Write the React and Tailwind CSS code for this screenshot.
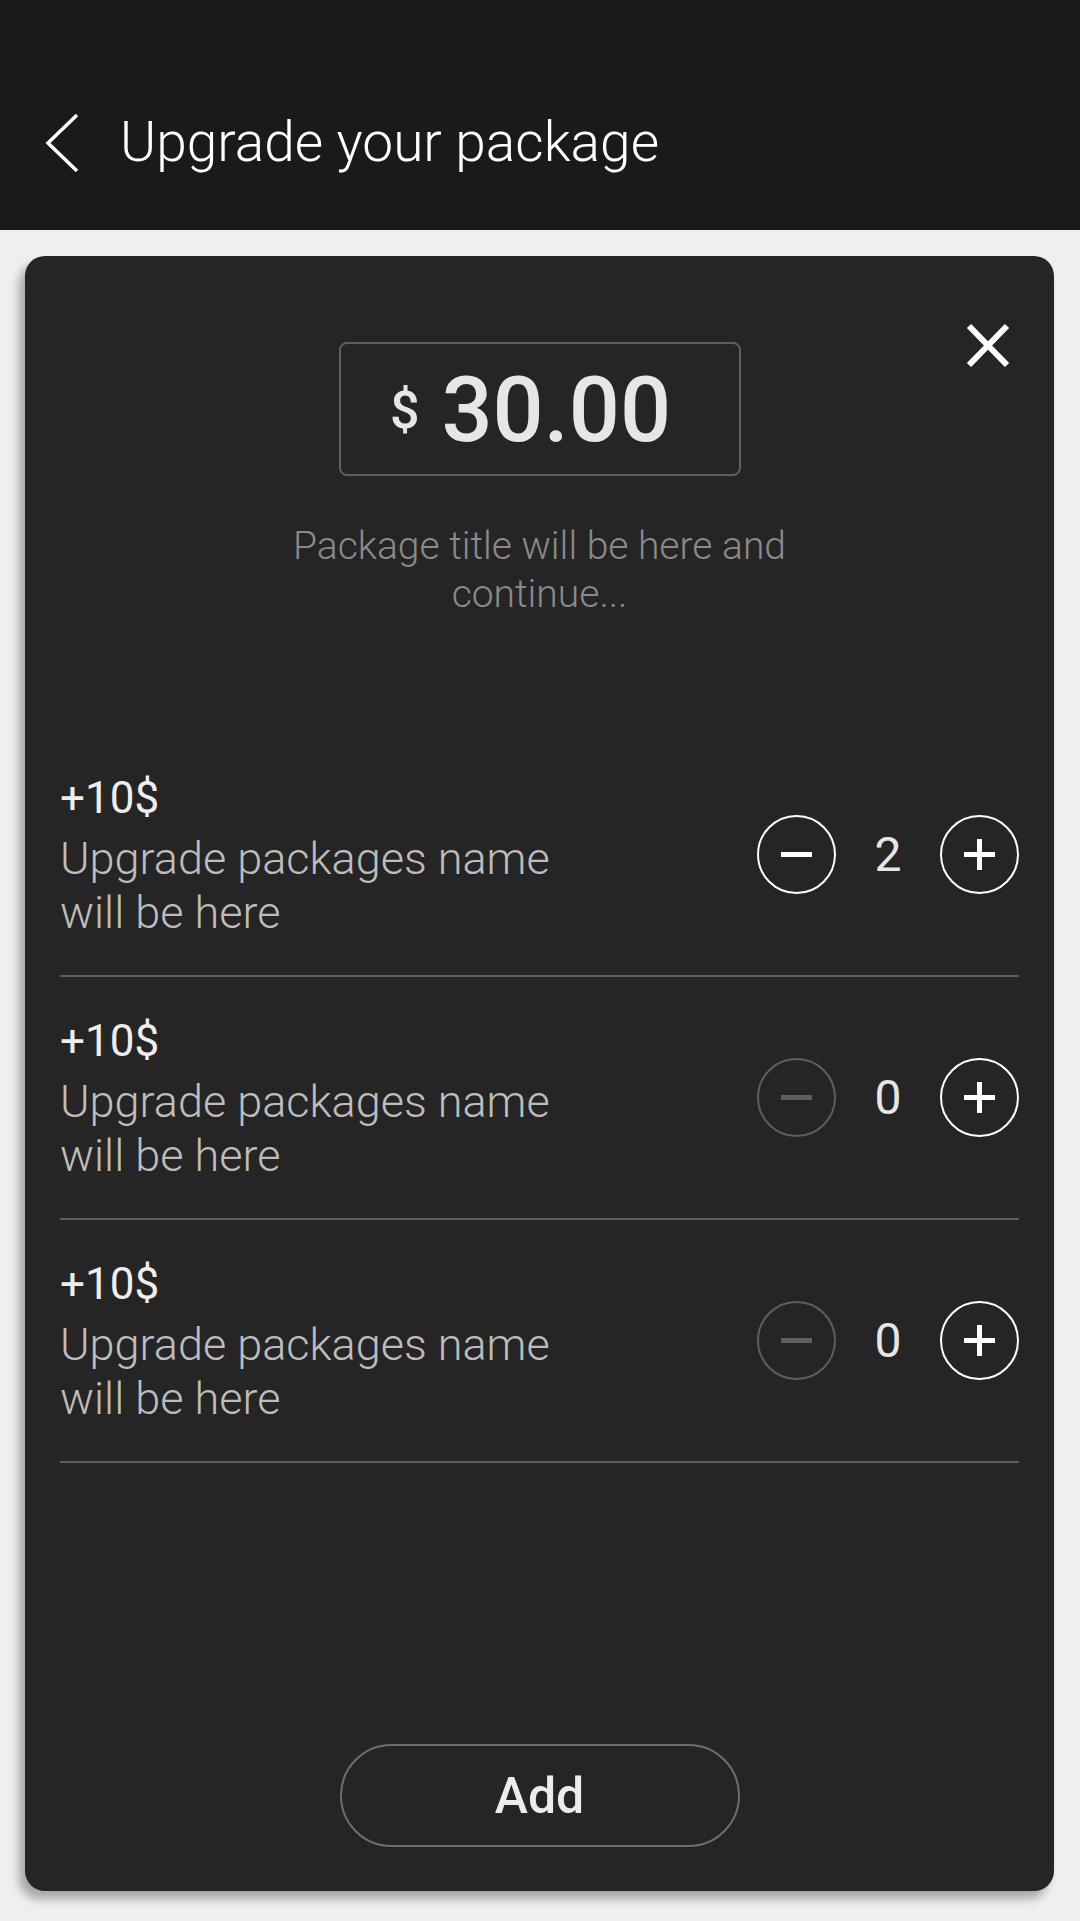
import React from "react";

const upgrades = [
  { price: "+10$", name: "Upgrade packages name will be here", qty: 2 },
  { price: "+10$", name: "Upgrade packages name will be here", qty: 0 },
  { price: "+10$", name: "Upgrade packages name will be here", qty: 0 },
];

const MinusIcon = ({ active }) => (
  <span
    className={`block w-[31px] h-[5px] ${active ? "bg-white" : "bg-[#5e5e5e]"}`}
  />
);

const Stepper = ({ qty }) => {
  const active = qty > 0;
  return (
    <div className="flex items-center">
      <button
        className={`w-[79px] h-[79px] rounded-full border-2 flex items-center justify-center ${
          active ? "border-white" : "border-[#5e5e5e]"
        }`}>
        <MinusIcon active={active} />
      </button>
      <span className="w-[104px] text-center text-[48px] leading-none text-[#e6e6e6]">
        {qty}
      </span>
      <button className="w-[79px] h-[79px] rounded-full border-2 border-white flex items-center justify-center">
        <svg width="31" height="31" viewBox="0 0 31 31">
          <rect x="13" y="0" width="5" height="31" fill="#fff" />
          <rect x="0" y="13" width="31" height="5" fill="#fff" />
        </svg>
      </button>
    </div>
  );
};

const App = () => {
  return (
    <div
      className="min-h-[1921px] bg-[#efefef]"
      style={{ fontFamily: "Roboto, 'Liberation Sans', sans-serif" }}>
      {/* Header */}
      <header className="h-[230px] bg-[#1a1a1a] flex items-center pt-[55px]">
        <button className="ml-[45px] w-[34px] h-[58px]">
          <svg width="34" height="58" viewBox="0 0 34 58" fill="none">
            <polyline
              points="32,1 3,29 32,57"
              stroke="#fff"
              strokeWidth="3.5"
            />
          </svg>
        </button>
        <h1 className="ml-[41px] text-[55px] font-light text-white leading-none">
          Upgrade your package
        </h1>
      </header>

      {/* Card */}
      <div className="mt-[26px] ml-[25px] mr-[26px] h-[1635px] relative rounded-[20px] bg-[#252525] shadow-[-6px_8px_10px_rgba(0,0,0,0.3)] flex flex-col">
        <button className="absolute top-[67px] right-[44px] w-[44px] h-[45px]">
          <svg width="44" height="45" viewBox="0 0 44 45">
            <line x1="3" y1="3" x2="41" y2="42" stroke="#fff" strokeWidth="6" />
            <line x1="41" y1="3" x2="3" y2="42" stroke="#fff" strokeWidth="6" />
          </svg>
        </button>

        {/* Price */}
        <div className="mt-[86px] mx-auto w-[402px] h-[134px] rounded-[8px] border-2 border-[#5f5f5f] flex justify-center items-start pt-[22px] pr-[18px]">
          <span className="mt-[19px] text-[52px] leading-none font-medium text-[#e6e6e6]">
            $
          </span>
          <span className="ml-[22px] text-[90px] leading-none font-medium text-[#e6e6e6]">
            30.00
          </span>
        </div>

        <p className="mt-[46px] mx-auto w-[540px] text-center text-[39px] leading-[48px] font-light text-[#8a8a8a]">
          Package title will be here and continue...
        </p>

        {/* Upgrades */}
        <div className="mt-[116px] mx-[35px]">
          {upgrades.map((u, i) => (
            <div
              key={i}
              className="h-[243px] border-b-2 border-[#5c5c5c] flex items-center justify-between">
              <div className="w-[520px]">
                <div className="text-[44px] leading-[56px] text-[#eeeeee]">
                  {u.price}
                </div>
                <div className="mt-[6px] w-[510px] text-[45px] leading-[54px] font-light text-[#bdbdbd]">
                  {u.name}
                </div>
              </div>
              <Stepper qty={u.qty} />
            </div>
          ))}
        </div>

        <button className="mt-auto mb-[44px] mx-auto w-[400px] h-[103px] rounded-full border-2 border-[#6e6e6e] text-[50px] font-medium text-[#ececec] leading-none">
          Add
        </button>
      </div>
    </div>
  );
};

export default App;
